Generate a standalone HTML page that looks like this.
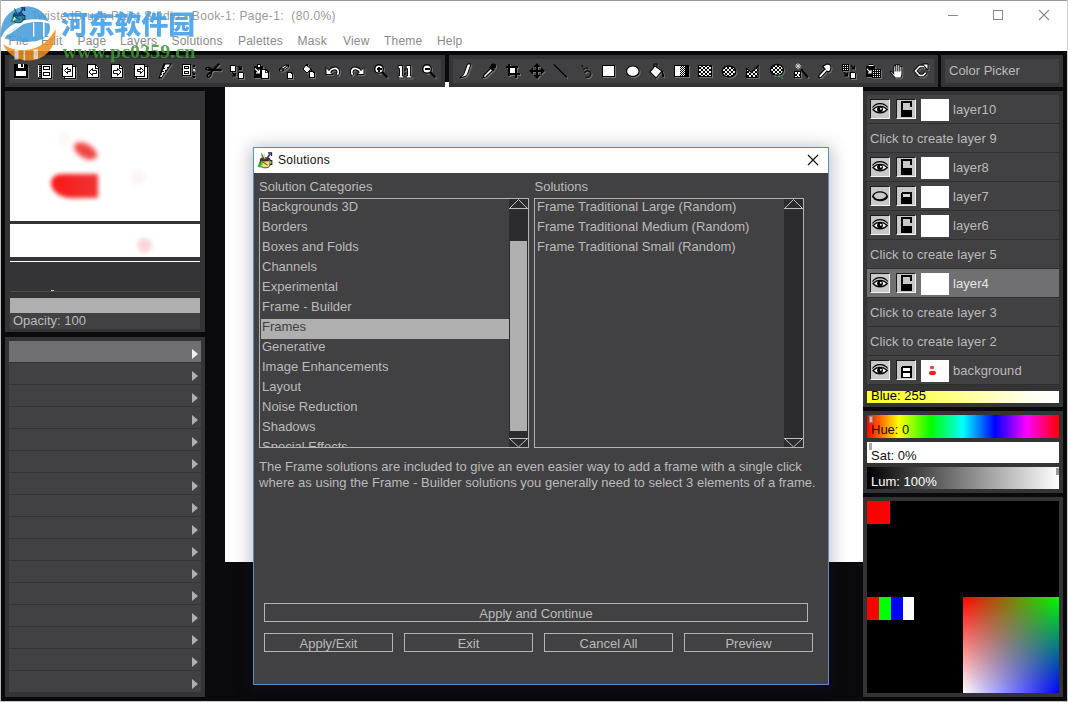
<!DOCTYPE html>
<html lang="en"><head><meta charset="utf-8"><title>TwistedBrush Paint Studio</title>
<style>
*{margin:0;padding:0;box-sizing:border-box}
html,body{width:1068px;height:702px;overflow:hidden;background:#0a090b}
body{position:relative;font-family:"Liberation Sans","Noto Sans CJK SC",sans-serif;font-size:13px;color:#bcbbbc}
.a{position:absolute}
.p{position:absolute;background:#343335}
.i{position:absolute;background:#414042}
.t{position:absolute;white-space:nowrap;line-height:16px}
.mn{position:absolute;top:33px;font-size:12px;color:#8a8a8a;white-space:nowrap;line-height:16px;letter-spacing:.2px}
.ic{position:absolute;top:63px;width:16px;height:16px;overflow:visible;filter:drop-shadow(1px 1px 0 rgba(160,160,160,.55))}
.row{position:absolute;left:9px;width:192px;height:21px;background:#414042}
.tri{position:absolute;left:192px;width:0;height:0;border-left:6px solid #b0afb0;border-top:5.5px solid transparent;border-bottom:5.5px solid transparent}
.lb{position:absolute;border:1px solid #b4b3b4;background:#414042}
.li{position:absolute;left:1px;height:20px;line-height:15px;padding-left:1px;white-space:nowrap;font-size:13px;}
.btn{position:absolute;height:19px;border:1px solid #b4b3b4;text-align:center;line-height:19px;font-size:13px;color:#bcbbbc}
.lr{position:absolute;left:867px;width:192px;height:29px;border-bottom:1px solid #2f2e30}
.lt{position:absolute;top:7px;line-height:16px;font-size:13px;letter-spacing:.08px;white-space:nowrap;color:#bcbbbc}
.eb{position:absolute;top:4px;width:20px;height:20px;background:#c8c8c8;border:1px solid #1a1a1a;border-right-color:#f4f4f4;border-bottom-color:#f4f4f4}
.th{position:absolute;left:54px;top:4px;width:28px;height:22px;background:#fff}
</style></head>
<body>
<div class="a" style="left:0;top:0;width:1068px;height:51px;background:#fff"></div>
<div class="a" style="left:0;top:0;width:1068px;height:1px;background:#9a9a9a"></div>
<div class="a" style="left:0;top:0;width:1px;height:702px;background:#b8b8b8"></div>
<div class="a" style="left:1067px;top:0;width:1px;height:702px;background:#d0d0d0"></div>
<div class="a" style="left:0;top:701px;width:1068px;height:1px;background:#c8c8c8"></div>
<div class="t" style="left:31px;top:8px;font-size:12px;color:#9a9a9a;letter-spacing:.36px;line-height:16px">TwistedBrush Paint Studio - Book-1: Page-1:&nbsp; (80.0%)</div>
<svg class="a" style="left:940px;top:4px" width="120" height="24" viewBox="0 0 120 24"><g stroke="#8a8a8a" fill="none" stroke-width="1" shape-rendering="crispEdges"><path d="M8 11.5h10"/><rect x="53.5" y="6.5" width="9" height="9"/></g><path d="M99 6l10 10M109 6l-10 10" stroke="#8a8a8a" stroke-width="1.1" fill="none"/></svg>
<div class="mn" style="left:8.5px">File</div>
<div class="mn" style="left:41px">Edit</div>
<div class="mn" style="left:77.5px">Page</div>
<div class="mn" style="left:120px">Layers</div>
<div class="mn" style="left:171.5px">Solutions</div>
<div class="mn" style="left:238px">Palettes</div>
<div class="mn" style="left:297.5px">Mask</div>
<div class="mn" style="left:343px">View</div>
<div class="mn" style="left:384px">Theme</div>
<div class="mn" style="left:437px">Help</div>
<div class="a" style="left:225px;top:82px;width:638px;height:480px;background:#fff"></div>
<div class="p" style="left:5px;top:55px;width:440px;height:32px"></div><div class="i" style="left:9px;top:59px;width:432px;height:24px"></div>
<div class="p" style="left:449px;top:55px;width:489px;height:32px"></div><div class="i" style="left:453px;top:59px;width:481px;height:24px"></div>
<div class="p" style="left:941px;top:55px;width:122px;height:32px"></div><div class="i" style="left:945px;top:59px;width:114px;height:24px"></div>
<div class="t" style="left:949px;top:63px;font-size:13px">Color Picker</div>
<svg class="ic" style="left:13px" viewBox="0 0 16 16" shape-rendering="crispEdges"><path d="M1 1h12l2 2v12H1z" fill="#000"/><rect x="5" y="1" width="6" height="4" fill="#fff"/><rect x="8" y="1" width="2" height="3" fill="#000"/><rect x="3" y="8" width="10" height="5" fill="#fff"/></svg>
<svg class="ic" style="left:37px" viewBox="0 0 16 16" shape-rendering="crispEdges"><rect x="4" y="1" width="11" height="14.5" fill="#000"/><rect x="5" y="2" width="9" height="12.5" fill="#fff"/><rect x="1" y="1" width="3" height="0.9" fill="#000"/><rect x="1" y="3" width="3" height="0.9" fill="#000"/><rect x="1" y="5" width="3" height="0.9" fill="#000"/><rect x="1" y="7" width="3" height="0.9" fill="#000"/><rect x="1" y="9" width="3" height="0.9" fill="#000"/><rect x="1" y="11" width="3" height="0.9" fill="#000"/><rect x="1" y="13" width="3" height="0.9" fill="#000"/><rect x="1" y="15" width="3" height="0.9" fill="#000"/><rect x="1" y="2" width="0.8" height="12" fill="#fff"/><rect x="6" y="2.5" width="7" height="4.5" fill="#000"/><rect x="7.2" y="3.7" width="4.6" height="2.1" fill="#fff"/><rect x="6" y="8.5" width="7" height="4.5" fill="#000"/><rect x="7.2" y="9.7" width="4.6" height="2.1" fill="#fff"/></svg>
<svg class="ic" style="left:61px" viewBox="0 0 16 16" shape-rendering="crispEdges"><rect x="3" y="3" width="12" height="12.5" fill="#000"/><rect x="4" y="4" width="10" height="10.5" fill="#fff"/><rect x="1" y="1" width="11" height="12.5" fill="#000"/><rect x="2" y="2" width="9" height="10.5" fill="#fff"/><path d="M3.500 7.500l3-3v2h3v2h-3v2z" fill="#fff" stroke="#000" stroke-width="1" shape-rendering="auto"/></svg>
<svg class="ic" style="left:85px" viewBox="0 0 16 16" shape-rendering="crispEdges"><path d="M2 1h8l4 4v10H2z" fill="#000"/><path d="M3 2h6.500l3.500 3.500v8.500H3z" fill="#fff"/><path d="M10 2v3h3" fill="#fff" stroke="#000" stroke-width="1"/><path d="M4 9l3.500-3.500v2h4v3h-4v2z" fill="#fff" stroke="#000" stroke-width="1" shape-rendering="auto"/></svg>
<svg class="ic" style="left:109px" viewBox="0 0 16 16" shape-rendering="crispEdges"><path d="M2 1h8l4 4v10H2z" fill="#000"/><path d="M3 2h6.500l3.500 3.500v8.500H3z" fill="#fff"/><path d="M10 2v3h3" fill="#fff" stroke="#000" stroke-width="1"/><path d="M12 9l-3.500-3.500v2h-4v3h4v2z" fill="#fff" stroke="#000" stroke-width="1" shape-rendering="auto"/></svg>
<svg class="ic" style="left:133px" viewBox="0 0 16 16" shape-rendering="crispEdges"><rect x="3" y="3" width="12" height="12.5" fill="#000"/><rect x="4" y="4" width="10" height="10.5" fill="#fff"/><rect x="1" y="1" width="11" height="12.5" fill="#000"/><rect x="2" y="2" width="9" height="10.5" fill="#fff"/><path d="M10.500 7.500l-3-3v2h-3v2h3v2z" fill="#fff" stroke="#000" stroke-width="1" shape-rendering="auto"/></svg>
<svg class="ic" style="left:157px" viewBox="0 0 16 16" shape-rendering="crispEdges"><path d="M6.500 .5h8.500l-10.500 15h-3z" fill="#000" shape-rendering="auto"/><path d="M8.500 1.500h4.500l-8.500 12.500h-1.500z" fill="#fff" shape-rendering="auto"/><path d="M6 5.500h1.500M5 8.500h1.500M3.500 11.500h1.500M11.500 4.500h-1.500M9.500 7.500h-1.500M7.500 10.500h-1.500" fill="none" stroke="#000" stroke-width="1"/></svg>
<svg class="ic" style="left:181px" viewBox="0 0 16 16" shape-rendering="crispEdges"><rect x="1" y="1" width="9" height="12" fill="#000"/><rect x="2" y="2" width="7" height="10" fill="#fff"/><rect x="3" y="3" width="5" height="3" fill="#000"/><rect x="4" y="4" width="3" height="1" fill="#fff"/><rect x="3" y="8" width="5" height="3" fill="#000"/><rect x="4" y="9" width="3" height="1" fill="#fff"/><rect x="12" y="2" width="2" height="2" fill="#000"/><rect x="12" y="6" width="2" height="2" fill="#ddd"/><rect x="12" y="10" width="2" height="2" fill="#000"/><rect x="12" y="13" width="2" height="2" fill="#000"/><rect x="11" y="9" width="1" height="1" fill="#000"/><rect x="11" y="13" width="1" height="1" fill="#000"/></svg>
<svg class="ic" style="left:205px" viewBox="0 0 16 16" shape-rendering="crispEdges"><g shape-rendering="auto" fill="none" stroke="#000"><path d="M13.500 1.500L4.500 10.500M15.500 7.200L4 6.300" stroke-width="2.300" stroke-linecap="round"/><ellipse cx="3.300" cy="5.800" rx="2.400" ry="1.400" stroke-width="1.300"/><ellipse cx="4.200" cy="12" rx="1.500" ry="2.600" transform="rotate(38 4.200 12)" stroke-width="1.300"/></g></svg>
<svg class="ic" style="left:229px" viewBox="0 0 16 16" shape-rendering="crispEdges"><path d="M1 1.5h4l2 2v5h-6z" fill="#000"/><path d="M2 2.5h2.500l1.500 1.500v3.500h-4z" fill="#fff"/><path d="M9 8.5h4l2 2v5h-6z" fill="#000"/><path d="M10 9.5h2.500l1.500 1.500v3.500h-4z" fill="#fff"/><path d="M9 3l3 3M12.300 3.300v3h-3M3 9.500l3 3M6.300 9.800v3h-3" fill="none" stroke="#000" stroke-width="1.3" shape-rendering="auto"/></svg>
<svg class="ic" style="left:253px" viewBox="0 0 16 16" shape-rendering="crispEdges"><rect x="0.5" y="3" width="9" height="11.5" fill="#000"/><rect x="3.5" y="1" width="4.5" height="3" fill="#000"/><rect x="4.5" y="1.8" width="2.5" height="0.8" fill="#fff"/><rect x="4.5" y="3.2" width="2.5" height="0.8" fill="#fff"/><path d="M2 5.500l4 4M6.300 6.500v3.300h-3.300" fill="none" stroke="#fff" stroke-width="1.3" shape-rendering="auto"/><path d="M7.500 5.500h5l3 3v7h-8z" fill="#000"/><path d="M8.500 6.500h3.500l2.500 2.500v5.500h-6z" fill="#fff"/><path d="M12 6.500v2.500h2.500" fill="none" stroke="#000" stroke-width="0.8"/></svg>
<svg class="ic" style="left:277px" viewBox="0 0 16 16" shape-rendering="crispEdges"><path d="M2.500 6l5.500-3.800h3.500l-5.500 3.800zM2.500 6h3.500v2h-3.500zM6 6l5.500-3.800v2l-5.500 3.800z" fill="#fff" stroke="#000" stroke-width="1" shape-rendering="auto"/><path d="M9.5 8.5h4l2 2v5h-6z" fill="#000"/><path d="M10.5 9.5h2.500l1.500 1.500v3.500h-4z" fill="#fff"/></svg>
<svg class="ic" style="left:301px" viewBox="0 0 16 16" shape-rendering="crispEdges"><path d="M5 2l5 4-4 4-4-4z" fill="#fff" stroke="#000" stroke-width="1" shape-rendering="auto"/><rect x="5" y="1" width="2" height="2" fill="#000"/><path d="M10 6l1.500 3" fill="none" stroke="#000" stroke-width="1.5" shape-rendering="auto"/><path d="M8 8h4l2 2v5h-6z" fill="#000"/><path d="M9 9h2.500l1.500 1.500v3.500h-4z" fill="#fff"/></svg>
<svg class="ic" style="left:325px" viewBox="0 0 16 16" shape-rendering="crispEdges"><g shape-rendering="auto" fill="none" stroke-linecap="butt"><path d="M5 9C6.500 4.500 12.500 4 13.300 8.500C13.500 10 12.800 11 11.800 12" stroke="#000" stroke-width="3.600"/><path d="M1 4.500V11.500H8Z" fill="#fff" stroke="#000" stroke-width="1"/><path d="M4 9.500C6.500 4.500 12.500 4 13.300 8.500C13.500 10 12.800 11 12.200 11.600" stroke="#fff" stroke-width="1.600"/></g></svg>
<svg class="ic" style="left:349px" viewBox="0 0 16 16" shape-rendering="crispEdges"><g shape-rendering="auto" fill="none" stroke-linecap="butt" transform="translate(16 0) scale(-1 1)"><path d="M5 9C6.500 4.500 12.500 4 13.300 8.500C13.500 10 12.800 11 11.800 12" stroke="#000" stroke-width="3.600"/><path d="M1 4.500V11.500H8Z" fill="#fff" stroke="#000" stroke-width="1"/><path d="M4 9.500C6.500 4.500 12.500 4 13.300 8.500C13.500 10 12.800 11 12.200 11.600" stroke="#fff" stroke-width="1.600"/></g></svg>
<svg class="ic" style="left:373px" viewBox="0 0 16 16" shape-rendering="crispEdges"><g shape-rendering="auto"><path d="M9 9l5.500 5.500" stroke="#000" stroke-width="2.200"/><circle cx="6" cy="6" r="4.300" fill="#fff" stroke="#000" stroke-width="1.400"/><path d="M3.500 6h5M6 3.500v5" stroke="#000" stroke-width="1.300" shape-rendering="crispEdges"/></g></svg>
<svg class="ic" style="left:397px" viewBox="0 0 16 16" shape-rendering="crispEdges"><g shape-rendering="auto"><path d="M1.200 2.500h4.300v10.500h1.500v2h-6v-2h1.500v-7.500h-1.300z" fill="#fff" stroke="#000" stroke-width="0.9"/><path d="M9.200 2.500h4.300v10.500h1.500v2h-6v-2h1.500v-7.500h-1.300z" fill="#fff" stroke="#000" stroke-width="0.9"/><rect x="7" y="5.8" width="1.8" height="2" fill="#111"/><rect x="7" y="10" width="1.8" height="2" fill="#111"/></g></svg>
<svg class="ic" style="left:421px" viewBox="0 0 16 16" shape-rendering="crispEdges"><g shape-rendering="auto"><path d="M9 9l5.500 5.500" stroke="#000" stroke-width="2.200"/><circle cx="6" cy="6" r="4.300" fill="#fff" stroke="#000" stroke-width="1.400"/><path d="M3.500 6h5" stroke="#000" stroke-width="1.300" shape-rendering="crispEdges"/></g></svg>
<svg class="ic" style="left:457px" viewBox="0 0 16 16" shape-rendering="crispEdges"><path d="M10.500 1h3.500l-3.500 10c-1 2-3 3.200-7.500 3.500c2.500-1 3.500-2.500 4-4z" fill="#fff" stroke="#000" stroke-width="1" shape-rendering="auto"/></svg>
<svg class="ic" style="left:481px" viewBox="0 0 16 16" shape-rendering="crispEdges"><g shape-rendering="auto"><path d="M2 14.500l1-2.500 7-7 2 2-7 7z" fill="#fff" stroke="#000" stroke-width="1.2"/><path d="M9 3.500l4 4" fill="none" stroke="#000" stroke-width="2.4"/><circle cx="12.500" cy="3" r="2.600" fill="#000"/></g></svg>
<svg class="ic" style="left:505px" viewBox="0 0 16 16" shape-rendering="crispEdges"><rect x="3" y="1" width="2" height="12" fill="#000"/><rect x="1" y="3" width="12" height="2" fill="#000"/><rect x="10" y="3" width="2" height="12" fill="#000"/><rect x="3" y="10" width="12" height="2" fill="#000"/><rect x="5" y="5" width="5" height="5" fill="#fff"/></svg>
<svg class="ic" style="left:529px" viewBox="0 0 16 16" shape-rendering="crispEdges"><path d="M8 0l3.500 4h-2.500v3h3v-2.500l4 3.500-4 3.500v-2.500h-3v3h2.500l-3.500 4-3.500-4h2.500v-3h-3v2.500l-4-3.500 4-3.500v2.500h3v-3h-2.500z" fill="#000" shape-rendering="auto"/></svg>
<svg class="ic" style="left:553px" viewBox="0 0 16 16" shape-rendering="crispEdges"><path d="M1 1.500l13 13" fill="none" stroke="#000" stroke-width="1.5" shape-rendering="auto"/></svg>
<svg class="ic" style="left:577px" viewBox="0 0 16 16" shape-rendering="crispEdges"><path d="M4.500 2l2 2.500M6.500 7c.5-2.500 3.500-2.500 4.500-.5M7.500 10c1-3 6-2.500 6.500 1-.5 3-3.500 4-5.500 3" fill="none" stroke="#161616" stroke-width="1.4" shape-rendering="auto"/></svg>
<svg class="ic" style="left:601px" viewBox="0 0 16 16" shape-rendering="crispEdges"><rect x="1" y="2" width="13" height="12" fill="#000"/><rect x="2" y="3" width="11" height="10" fill="#fff"/></svg>
<svg class="ic" style="left:625px" viewBox="0 0 16 16" shape-rendering="crispEdges"><ellipse cx="7.800" cy="8.300" rx="6.300" ry="5.300" fill="#fff" stroke="#000" stroke-width="1.200" shape-rendering="auto"/></svg>
<svg class="ic" style="left:649px" viewBox="0 0 16 16" shape-rendering="crispEdges"><g shape-rendering="auto"><path d="M6 3l7 5-6 7-6-6z" fill="#fff" stroke="#000" stroke-width="1.1"/><path d="M5 4v-3h3v2.500" fill="none" stroke="#000" stroke-width="1.1"/><path d="M13 8l1.500 6" fill="none" stroke="#000" stroke-width="1.8"/></g></svg>
<svg class="ic" style="left:673px" viewBox="0 0 16 16" shape-rendering="crispEdges"><rect x="1" y="2" width="15" height="12" fill="#000"/><rect x="2" y="3" width="5" height="10" fill="#fff"/><rect x="7" y="3" width="1" height="1" fill="#fff"/><rect x="9" y="3" width="1" height="1" fill="#fff"/><rect x="8" y="4" width="1" height="1" fill="#fff"/><rect x="10" y="4" width="1" height="1" fill="#fff"/><rect x="7" y="5" width="1" height="1" fill="#fff"/><rect x="9" y="5" width="1" height="1" fill="#fff"/><rect x="8" y="6" width="1" height="1" fill="#fff"/><rect x="10" y="6" width="1" height="1" fill="#fff"/><rect x="7" y="7" width="1" height="1" fill="#fff"/><rect x="9" y="7" width="1" height="1" fill="#fff"/><rect x="8" y="8" width="1" height="1" fill="#fff"/><rect x="10" y="8" width="1" height="1" fill="#fff"/><rect x="7" y="9" width="1" height="1" fill="#fff"/><rect x="9" y="9" width="1" height="1" fill="#fff"/><rect x="8" y="10" width="1" height="1" fill="#fff"/><rect x="10" y="10" width="1" height="1" fill="#fff"/><rect x="7" y="11" width="1" height="1" fill="#fff"/><rect x="9" y="11" width="1" height="1" fill="#fff"/><rect x="8" y="12" width="1" height="1" fill="#fff"/><rect x="10" y="12" width="1" height="1" fill="#fff"/><rect x="11" y="3" width="1" height="1" fill="#fff"/><rect x="11" y="5" width="1" height="1" fill="#fff"/><rect x="11" y="7" width="1" height="1" fill="#fff"/><rect x="11" y="9" width="1" height="1" fill="#fff"/><rect x="11" y="11" width="1" height="1" fill="#fff"/></svg>
<svg class="ic" style="left:697px" viewBox="0 0 16 16" shape-rendering="crispEdges"><defs><pattern id="ck" width="4" height="4" patternUnits="userSpaceOnUse"><rect width="4" height="4" fill="#000"/><rect width="2" height="2" fill="#fff"/><rect x="2" y="2" width="2" height="2" fill="#fff"/></pattern></defs><rect x="1" y="2" width="14" height="12" fill="#000"/><rect x="2" y="3" width="12" height="10" fill="url(#ck)"/></svg>
<svg class="ic" style="left:721px" viewBox="0 0 16 16" shape-rendering="crispEdges"><ellipse cx="8" cy="8.500" rx="6.800" ry="5.500" fill="url(#ck)" stroke="#000" stroke-width="1.300" shape-rendering="auto"/></svg>
<svg class="ic" style="left:745px" viewBox="0 0 16 16" shape-rendering="crispEdges"><path d="M1.500 5.500l5 4 6.500-6.500v11.500h-11.500z" fill="url(#ck)" stroke="#000" stroke-width="1.2" shape-rendering="auto"/></svg>
<svg class="ic" style="left:769px" viewBox="0 0 16 16" shape-rendering="crispEdges"><g shape-rendering="auto"><ellipse cx="8" cy="7" rx="6.500" ry="5.500" fill="url(#ck)" stroke="#000" stroke-width="1.300"/><path d="M5 13c2-2 5-2 8 2" fill="none" stroke="#2e7d32" stroke-width="1.200"/></g></svg>
<svg class="ic" style="left:793px" viewBox="0 0 16 16" shape-rendering="crispEdges"><g shape-rendering="auto"><path d="M8 6l7 8.500" fill="none" stroke="#000" stroke-width="2"/><path d="M3 1l4 4M7 1l-4 4M5 0v6M2 3h6" fill="none" stroke="#ddd" stroke-width="0.8"/></g><rect x="1" y="8" width="7" height="7" fill="#000"/><rect x="2" y="9" width="2" height="2" fill="#fff"/><rect x="5" y="9" width="2" height="2" fill="#fff"/><rect x="3.5" y="11" width="2" height="2" fill="#fff"/><rect x="2" y="13" width="2" height="1" fill="#fff"/><rect x="5" y="13" width="2" height="1" fill="#fff"/></svg>
<svg class="ic" style="left:817px" viewBox="0 0 16 16" shape-rendering="crispEdges"><g shape-rendering="auto"><path d="M6 3l4-2c3 0 4 2 4 4l-1 3-2 1-1-1-6 6.500h-2v-2l6-6.500-1-1z" fill="#fff" stroke="#000" stroke-width="1.1"/><path d="M5 3.500l3 3" fill="none" stroke="#000" stroke-width="1"/></g></svg>
<svg class="ic" style="left:841px" viewBox="0 0 16 16" shape-rendering="crispEdges"><rect x="1" y="1" width="7" height="7" fill="#000"/><rect x="2.0" y="2.0" width="1.0" height="1.0" fill="#fff"/><rect x="2.0" y="4.0" width="1.0" height="1.0" fill="#fff"/><rect x="2.0" y="6.0" width="1.0" height="1.0" fill="#fff"/><rect x="4.0" y="2.0" width="1.0" height="1.0" fill="#fff"/><rect x="4.0" y="4.0" width="1.0" height="1.0" fill="#fff"/><rect x="4.0" y="6.0" width="1.0" height="1.0" fill="#fff"/><rect x="6.0" y="2.0" width="1.0" height="1.0" fill="#fff"/><rect x="6.0" y="4.0" width="1.0" height="1.0" fill="#fff"/><rect x="6.0" y="6.0" width="1.0" height="1.0" fill="#fff"/><path d="M9 8.5h4l2 2v5h-6z" fill="#000"/><path d="M10 9.5h2.500l1.500 1.500v3.500h-4z" fill="#fff"/><path d="M10 2.500l3 3M13.300 2.800v3h-3M3 9.500l3 3M6.300 9.800v3h-3" fill="none" stroke="#000" stroke-width="1.3" shape-rendering="auto"/></svg>
<svg class="ic" style="left:865px" viewBox="0 0 16 16" shape-rendering="crispEdges"><rect x="1" y="3" width="9" height="11" fill="#000"/><rect x="4" y="1" width="4" height="3" fill="#000"/><rect x="4" y="2" width="4" height="1" fill="#fff"/><path d="M2 6l4 4M6 7v3h-3" fill="none" stroke="#fff" stroke-width="1.2" shape-rendering="auto"/><rect x="7" y="6" width="9" height="9" fill="#000"/><rect x="8.0" y="7.0" width="1.0" height="1.0" fill="#fff"/><rect x="8.0" y="9.0" width="1.0" height="1.0" fill="#fff"/><rect x="8.0" y="11.0" width="1.0" height="1.0" fill="#fff"/><rect x="8.0" y="13.0" width="1.0" height="1.0" fill="#fff"/><rect x="10.0" y="7.0" width="1.0" height="1.0" fill="#fff"/><rect x="10.0" y="9.0" width="1.0" height="1.0" fill="#fff"/><rect x="10.0" y="11.0" width="1.0" height="1.0" fill="#fff"/><rect x="10.0" y="13.0" width="1.0" height="1.0" fill="#fff"/><rect x="12.0" y="7.0" width="1.0" height="1.0" fill="#fff"/><rect x="12.0" y="9.0" width="1.0" height="1.0" fill="#fff"/><rect x="12.0" y="11.0" width="1.0" height="1.0" fill="#fff"/><rect x="12.0" y="13.0" width="1.0" height="1.0" fill="#fff"/><rect x="14.0" y="7.0" width="1.0" height="1.0" fill="#fff"/><rect x="14.0" y="9.0" width="1.0" height="1.0" fill="#fff"/><rect x="14.0" y="11.0" width="1.0" height="1.0" fill="#fff"/><rect x="14.0" y="13.0" width="1.0" height="1.0" fill="#fff"/></svg>
<svg class="ic" style="left:889px" viewBox="0 0 16 16" shape-rendering="crispEdges"><g shape-rendering="auto"><rect x="4.5" y="2.5" width="2.6" height="8" fill="#000"/><rect x="6.5" y="1" width="2.6" height="9" fill="#000"/><rect x="8.5" y="1.5" width="2.6" height="9" fill="#000"/><rect x="10.5" y="3" width="2.6" height="8" fill="#000"/><path d="M4.300 7h9v5l-1 3.300h-6.500l-1.500-2.500z" fill="#000"/><path d="M4.800 10.500L2.300 7.500L.8 8.800L4.500 14z" fill="#000"/><rect x="5.3" y="3.3" width="1" height="6.5" fill="#fff"/><rect x="7.3" y="1.8" width="1" height="8" fill="#fff"/><rect x="9.3" y="2.3" width="1" height="7.5" fill="#fff"/><rect x="11.3" y="3.8" width="1" height="6" fill="#fff"/><path d="M5.200 8.500h7.200v3.300l-.8 2.700h-5.300l-1.100-2z" fill="#fff"/><path d="M5.300 12L2.400 8.700L2 9.100L5.300 13.500z" fill="#fff"/></g></svg>
<svg class="ic" style="left:913px" viewBox="0 0 16 16" shape-rendering="crispEdges"><g shape-rendering="auto" fill="none" stroke-linejoin="miter"><path d="M11 3.500H6.500L2.500 8L6.500 12.500H10L13 9.500" stroke="#000" stroke-width="3.600"/><path d="M11 3.500H6.500L2.500 8L6.500 12.500H10L12.700 9.800" stroke="#fff" stroke-width="1.600"/><path d="M9.500 1L15 1L15 7Z" fill="#fff" stroke="#000" stroke-width="1"/></g></svg>
<div class="p" style="left:5px;top:91px;width:200px;height:241px"></div>
<div class="a" style="left:10px;top:120px;width:190px;height:101px;background:#fff;overflow:hidden"><div class="a" style="left:63px;top:23.5px;width:25px;height:14px;border-radius:50%;background:#ee3c3c;transform:rotate(30deg);filter:blur(2.4px);opacity:.95"></div><div class="a" style="left:41px;top:54px;width:47px;height:24px;border-radius:12px 2px 3px 24px / 10px 2px 3px 18px;background:linear-gradient(90deg,#ff1414,#f22a2a 60%,#f03434);filter:blur(2.2px)"></div><div class="a" style="left:121px;top:50px;width:15px;height:15px;border-radius:50%;background:#fbdfe2;filter:blur(2.5px);opacity:.38"></div><div class="a" style="left:47px;top:12px;width:14px;height:14px;border-radius:50%;background:#fbe6e8;filter:blur(2.5px);opacity:.3"></div></div>
<div class="a" style="left:10px;top:224px;width:190px;height:33px;background:#fff;overflow:hidden"><div class="a" style="left:127px;top:14px;width:15px;height:15px;border-radius:50%;background:#f9c9cd;filter:blur(2px);opacity:.75"></div></div>
<div class="a" style="left:10px;top:261px;width:190px;height:1px;background:#fff"></div>
<div class="a" style="left:10px;top:291px;width:190px;height:1px;background:#4c4b4d"></div>
<div class="a" style="left:51px;top:290px;width:3px;height:1px;background:#d0d0d0"></div>
<div class="a" style="left:10px;top:298px;width:190px;height:15px;background:#b0afb0"></div>
<div class="i" style="left:10px;top:313px;width:190px;height:16px"></div>
<div class="t" style="left:13px;top:313px;font-size:13px;">Opacity: 100</div>
<div class="p" style="left:5px;top:337px;width:200px;height:360px"></div>
<div class="row" style="top:341px;background:#706f71"></div><div class="tri" style="top:349px;border-left-color:#f2f2f2"></div>
<div class="row" style="top:363px"></div><div class="tri" style="top:371px"></div>
<div class="row" style="top:385px"></div><div class="tri" style="top:393px"></div>
<div class="row" style="top:407px"></div><div class="tri" style="top:415px"></div>
<div class="row" style="top:429px"></div><div class="tri" style="top:437px"></div>
<div class="row" style="top:451px"></div><div class="tri" style="top:459px"></div>
<div class="row" style="top:473px"></div><div class="tri" style="top:481px"></div>
<div class="row" style="top:495px"></div><div class="tri" style="top:503px"></div>
<div class="row" style="top:517px"></div><div class="tri" style="top:525px"></div>
<div class="row" style="top:539px"></div><div class="tri" style="top:547px"></div>
<div class="row" style="top:561px"></div><div class="tri" style="top:569px"></div>
<div class="row" style="top:583px"></div><div class="tri" style="top:591px"></div>
<div class="row" style="top:605px"></div><div class="tri" style="top:613px"></div>
<div class="row" style="top:627px"></div><div class="tri" style="top:635px"></div>
<div class="row" style="top:649px"></div><div class="tri" style="top:657px"></div>
<div class="row" style="top:671px"></div><div class="tri" style="top:679px"></div>
<div class="p" style="left:863px;top:91px;width:200px;height:316px"></div>
<div class="i" style="left:867px;top:95px;width:192px;height:289px"></div>
<div class="lr" style="top:95px"><div class="eb" style="left:3px"><svg class="a" style="left:0;top:0" width="18" height="18" viewBox="0 0 18 18"><path d="M1.500 7.500C5 2.200 13 2.200 16.800 7.500" fill="none" stroke="#000" stroke-width="1.200"/><path d="M2 9.500C6 5.200 12 5.200 16.300 9.500C12 14 6 14 2 9.500z" fill="#fff" stroke="#000" stroke-width="1.200"/><circle cx="9" cy="9.300" r="2.900" fill="#000"/><circle cx="9.800" cy="8.800" r="1" fill="#fff"/></svg></div><div class="eb" style="left:29px"><svg class="a" style="left:0;top:0" width="18" height="18" viewBox="0 0 18 18" shape-rendering="crispEdges"><path d="M4 1h11v6h-2v-4h-7v7h-2z" fill="#000"/><rect x="4" y="10" width="11" height="7" fill="#000"/></svg></div><div class="th"></div><div class="lt" style="left:86px">layer10</div></div>
<div class="lr" style="top:124px"><div class="lt" style="left:3px">Click to create layer 9</div></div>
<div class="lr" style="top:153px"><div class="eb" style="left:3px"><svg class="a" style="left:0;top:0" width="18" height="18" viewBox="0 0 18 18"><path d="M1.500 7.500C5 2.200 13 2.200 16.800 7.500" fill="none" stroke="#000" stroke-width="1.200"/><path d="M2 9.500C6 5.200 12 5.200 16.300 9.500C12 14 6 14 2 9.500z" fill="#fff" stroke="#000" stroke-width="1.200"/><circle cx="9" cy="9.300" r="2.900" fill="#000"/><circle cx="9.800" cy="8.800" r="1" fill="#fff"/></svg></div><div class="eb" style="left:29px"><svg class="a" style="left:0;top:0" width="18" height="18" viewBox="0 0 18 18" shape-rendering="crispEdges"><path d="M4 1h11v6h-2v-4h-7v7h-2z" fill="#000"/><rect x="4" y="10" width="11" height="7" fill="#000"/></svg></div><div class="th"></div><div class="lt" style="left:86px">layer8</div></div>
<div class="lr" style="top:182px"><div class="eb" style="left:3px"><svg class="a" style="left:0;top:0" width="18" height="18" viewBox="0 0 18 18"><path d="M1.800 9C4 3.400 14 3.400 16.400 9" fill="none" stroke="#000" stroke-width="1.200"/><path d="M1.800 9C4 14.600 14 14.600 16.400 9" fill="none" stroke="#000" stroke-width="2"/></svg></div><div class="eb" style="left:29px"><svg class="a" style="left:0;top:0" width="18" height="18" viewBox="0 0 18 18" shape-rendering="crispEdges"><path d="M5 5h9l1 1v11h-11v-11z" fill="#000"/><rect x="6" y="7" width="7" height="3" fill="#d4d4d4"/></svg></div><div class="th"></div><div class="lt" style="left:86px">layer7</div></div>
<div class="lr" style="top:211px"><div class="eb" style="left:3px"><svg class="a" style="left:0;top:0" width="18" height="18" viewBox="0 0 18 18"><path d="M1.500 7.500C5 2.200 13 2.200 16.800 7.500" fill="none" stroke="#000" stroke-width="1.200"/><path d="M2 9.500C6 5.200 12 5.200 16.300 9.500C12 14 6 14 2 9.500z" fill="#fff" stroke="#000" stroke-width="1.200"/><circle cx="9" cy="9.300" r="2.900" fill="#000"/><circle cx="9.800" cy="8.800" r="1" fill="#fff"/></svg></div><div class="eb" style="left:29px"><svg class="a" style="left:0;top:0" width="18" height="18" viewBox="0 0 18 18" shape-rendering="crispEdges"><path d="M4 1h11v6h-2v-4h-7v7h-2z" fill="#000"/><rect x="4" y="10" width="11" height="7" fill="#000"/></svg></div><div class="th"></div><div class="lt" style="left:86px">layer6</div></div>
<div class="lr" style="top:240px"><div class="lt" style="left:3px">Click to create layer 5</div></div>
<div class="lr" style="top:269px;background:#706f71"><div class="eb" style="left:3px"><svg class="a" style="left:0;top:0" width="18" height="18" viewBox="0 0 18 18"><path d="M1.500 7.500C5 2.200 13 2.200 16.800 7.500" fill="none" stroke="#000" stroke-width="1.200"/><path d="M2 9.500C6 5.200 12 5.200 16.300 9.500C12 14 6 14 2 9.500z" fill="#fff" stroke="#000" stroke-width="1.200"/><circle cx="9" cy="9.300" r="2.900" fill="#000"/><circle cx="9.800" cy="8.800" r="1" fill="#fff"/></svg></div><div class="eb" style="left:29px"><svg class="a" style="left:0;top:0" width="18" height="18" viewBox="0 0 18 18" shape-rendering="crispEdges"><path d="M4 1h11v6h-2v-4h-7v7h-2z" fill="#000"/><rect x="4" y="10" width="11" height="7" fill="#000"/></svg></div><div class="th"></div><div class="lt" style="left:86px;color:#e6e6e6">layer4</div></div>
<div class="lr" style="top:298px"><div class="lt" style="left:3px">Click to create layer 3</div></div>
<div class="lr" style="top:327px"><div class="lt" style="left:3px">Click to create layer 2</div></div>
<div class="lr" style="top:356px"><div class="eb" style="left:3px"><svg class="a" style="left:0;top:0" width="18" height="18" viewBox="0 0 18 18"><path d="M1.500 7.500C5 2.200 13 2.200 16.800 7.500" fill="none" stroke="#000" stroke-width="1.200"/><path d="M2 9.500C6 5.200 12 5.200 16.300 9.500C12 14 6 14 2 9.500z" fill="#fff" stroke="#000" stroke-width="1.200"/><circle cx="9" cy="9.300" r="2.900" fill="#000"/><circle cx="9.800" cy="8.800" r="1" fill="#fff"/></svg></div><div class="eb" style="left:29px"><svg class="a" style="left:0;top:0" width="18" height="18" viewBox="0 0 18 18" shape-rendering="crispEdges"><path d="M5 5h9l1 1v11h-11v-11z" fill="#000"/><rect x="6" y="7" width="7" height="3" fill="#fff"/><rect x="6" y="12" width="7" height="4" fill="#fff"/></svg></div><div class="th"><div class="a" style="left:9px;top:6px;width:4px;height:3px;background:#f04040;border-radius:1px"></div><div class="a" style="left:8px;top:11px;width:7px;height:4px;background:#f02020;border-radius:2px"></div></div><div class="lt" style="left:86px">background</div></div>
<div class="a" style="left:867px;top:391px;width:192px;height:12px;background:linear-gradient(90deg,#ffff28 0%,#ffff50 25%,#ffffa0 55%,#fffff0 85%,#fff 100%);overflow:hidden"><div class="t" style="left:4px;top:-3px;color:#000;font-size:13px">Blue: 255</div></div>
<div class="p" style="left:863px;top:411px;width:200px;height:82px"></div>
<div class="a" style="left:867px;top:415px;width:192px;height:23px;background:linear-gradient(90deg,#f00 0%,#ff0 16.6%,#0f0 33.3%,#0ff 50%,#00f 66.6%,#f0f 83.3%,#f00 100%)"></div>
<div class="a" style="left:869px;top:416px;width:4px;height:7px;background:#c0c0c0;border:1px solid #888"></div>
<div class="t" style="left:871px;top:422px;color:#111;font-size:13px">Hue: 0</div>
<div class="a" style="left:867px;top:442px;width:192px;height:21px;background:#fff"></div>
<div class="a" style="left:869px;top:443px;width:3px;height:7px;background:#aaa"></div>
<div class="t" style="left:871px;top:448px;color:#111;font-size:13px">Sat: 0%</div>
<div class="a" style="left:867px;top:467px;width:192px;height:22px;background:linear-gradient(90deg,#000,#fff)"></div>
<div class="a" style="left:1056px;top:468px;width:3px;height:7px;background:#999"></div>
<div class="t" style="left:871px;top:474px;color:#fff;font-size:13px">Lum: 100%</div>
<div class="p" style="left:863px;top:497px;width:200px;height:200px"></div>
<div class="a" style="left:867px;top:501px;width:192px;height:192px;background:#000"></div>
<div class="a" style="left:867px;top:501px;width:23px;height:23px;background:#f00"></div>
<div class="a" style="left:867px;top:597px;width:12px;height:23px;background:#f00"></div>
<div class="a" style="left:879px;top:597px;width:12px;height:23px;background:#0f0"></div>
<div class="a" style="left:891px;top:597px;width:12px;height:23px;background:#00f"></div>
<div class="a" style="left:903px;top:597px;width:11px;height:23px;background:#fff"></div>
<div class="a" style="left:963px;top:597px;width:96px;height:96px;background:linear-gradient(90deg,#fff,#00f)"><div class="a" style="left:0;top:0;width:96px;height:96px;background:linear-gradient(90deg,#f00,#0f0);-webkit-mask-image:linear-gradient(180deg,#000,transparent);mask-image:linear-gradient(180deg,#000,transparent)"></div></div>
<div class="a" style="left:253px;top:147px;width:576px;height:538px;background:#414042;border:1px solid #5b8cc2;box-shadow:0 2px 16px 2px rgba(30,25,70,.30)"></div>
<div class="a" style="left:254px;top:148px;width:574px;height:25px;background:#fff"></div>
<svg class="a" style="left:257px;top:152px" width="17" height="17" viewBox="0 0 17 17"><path d="M3 8C2 11 1.500 13 .5 14.500L3.500 15.800L4.500 9z" fill="#2fa82f"/><path d="M3.500 7.500h9.500v5.500c0 1.800-2 2.800-4.700 2.800s-4.800-1-4.800-2.800z" fill="#e6e272" stroke="#3a3a20" stroke-width=".9"/><ellipse cx="8.200" cy="7.300" rx="4.800" ry="1.800" fill="#7a2030" stroke="#222" stroke-width=".8"/><path d="M5.200 7l-1.200-6.500 2.700 3.500z" fill="#2f9a2f"/><path d="M6.800 6.500l.7-5.500 1.200 5.500z" fill="#e8d870"/><path d="M8.500 7.500l4-6.500 1.500 1-4 6z" fill="#2a3a9a"/><path d="M11 .8h3.500v3.200" fill="none" stroke="#222" stroke-width="1.300"/><path d="M13 8.500h1.800v4h-1.800" fill="none" stroke="#222" stroke-width="1.100"/><path d="M4 9l6.500 4" stroke="#222" stroke-width=".8"/><path d="M4 9.500l-1.500 5 3.500-2.500z" fill="#49c23a"/></svg>
<div class="t" style="left:278px;top:152px;font-size:12px;color:#111;letter-spacing:.29px">Solutions</div>
<svg class="a" style="left:806px;top:153px" width="14" height="14" viewBox="0 0 14 14"><path d="M2 2l10 10M12 2L2 12" stroke="#111" stroke-width="1.2" fill="none"/></svg>
<div class="t" style="left:259px;top:179px;">Solution Categories</div>
<div class="t" style="left:534.5px;top:179px;">Solutions</div>
<div class="lb" style="left:259px;top:198px;width:270px;height:250px;overflow:hidden"><div class="li" style="top:0px">Backgrounds 3D</div><div class="li" style="top:20px">Borders</div><div class="li" style="top:40px">Boxes and Folds</div><div class="li" style="top:60px">Channels</div><div class="li" style="top:80px">Experimental</div><div class="li" style="top:100px">Frame - Builder</div><div class="li" style="top:120px;background:#b0afb0;color:#414042;width:248px">Frames</div><div class="li" style="top:140px">Generative</div><div class="li" style="top:160px">Image Enhancements</div><div class="li" style="top:180px">Layout</div><div class="li" style="top:200px">Noise Reduction</div><div class="li" style="top:220px">Shadows</div><div class="li" style="top:240px">Special Effects</div><div class="a" style="left:249px;top:0;width:19px;height:248px;background:#2c2b2d"></div><div class="a" style="left:250px;top:42px;width:17px;height:190px;background:#b0afb0"></div><svg class="a" style="left:249px;top:0" width="19" height="248" viewBox="0 0 19 248"><path d="M0 9.500h19M0.500 9.500l9-9 9 9" fill="none" stroke="#c0bfc0" stroke-width="1"/><path d="M0 239.500h19M0.500 239.500l9 8.500 9-8.500" fill="none" stroke="#c0bfc0" stroke-width="1"/></svg></div>
<div class="lb" style="left:534px;top:198px;width:270px;height:250px;overflow:hidden"><div class="li" style="top:0px">Frame Traditional Large (Random)</div><div class="li" style="top:20px">Frame Traditional Medium (Random)</div><div class="li" style="top:40px">Frame Traditional Small (Random)</div><div class="a" style="left:249px;top:0;width:19px;height:248px;background:#2c2b2d"></div><svg class="a" style="left:249px;top:0" width="19" height="248" viewBox="0 0 19 248"><path d="M0 9.500h19M0.500 9.500l9-9 9 9" fill="none" stroke="#c0bfc0" stroke-width="1"/><path d="M0 239.500h19M0.500 239.500l9 8.500 9-8.500" fill="none" stroke="#c0bfc0" stroke-width="1"/></svg></div>
<div class="t" style="left:259px;top:459px;letter-spacing:.01px">The Frame solutions are included to give an even easier way to add a frame with a single click</div>
<div class="t" style="left:259px;top:475px;letter-spacing:.01px">where as using the Frame - Builder solutions you generally need to select 3 elements of a frame.</div>
<div class="btn" style="left:264px;top:603px;width:544px">Apply and Continue</div>
<div class="btn" style="left:264px;top:633px;width:129px">Apply/Exit</div>
<div class="btn" style="left:404px;top:633px;width:129px">Exit</div>
<div class="btn" style="left:544px;top:633px;width:129px">Cancel All</div>
<div class="btn" style="left:684px;top:633px;width:129px">Preview</div>
<svg class="a" style="left:0;top:0" width="200" height="66" viewBox="0 0 200 66"><g opacity=".86"><path d="M0.500 37C0 17 13 6.500 27 6.500C40 6.500 50 17 50 28C50 31 49 34 47 36C40 42 28 43 18 41C10 40 4 38.500 0.500 37Z" fill="#439bd9"/><path d="M1 39C4 28 15 21 30 19.500C38 19 45 19.500 50 22L50 24C44 22 38 21.500 31 22.500C19 24 8 31 3 41Z" fill="#fff"/><path d="M9 34.500L23.500 24V22.500L6.500 34.500Z" fill="#fff"/><rect x="33" y="22.500" width="1.300" height="14" fill="#fff"/><rect x="43" y="21.500" width="1.600" height="16" fill="#fff"/><path d="M3 44C8 56 20 61 30 60.500C46 60 57 46 55.500 29C50 40 40 49 26 50C16 50.500 8 48 3 44Z" fill="#ef8f22"/><path d="M14.500 49.500h4v10h-4zM23.500 50.500h1.600v10h-1.600zM33.500 49.500h4.500v9.500h-4.500z" fill="#fff" opacity=".8"/></g><text x="61" y="33.800" font-family="'Liberation Sans','Noto Sans CJK SC',sans-serif" font-weight="900" font-size="26.500" fill="#3f9ee8" opacity=".88" textLength="134" lengthAdjust="spacingAndGlyphs">河东软件园</text><text x="62.500" y="57.500" font-family="'Liberation Serif',serif" font-weight="bold" font-size="19" fill="#3c9a35" opacity=".86" textLength="133" lengthAdjust="spacingAndGlyphs">www.pc0359.cn</text></svg>
<svg class="a" style="left:10px;top:7px" width="17" height="17" viewBox="0 0 17 17"><path d="M3 8C2 11 1.500 13 .5 14.500L3.500 15.800L4.500 9z" fill="#1f8a6a"/><path d="M3.500 7.500h9.500v5.500c0 1.800-2 2.800-4.700 2.800s-4.800-1-4.800-2.800z" fill="#2b8fa8" stroke="#16334a" stroke-width=".9"/><ellipse cx="8.200" cy="7.300" rx="4.800" ry="1.800" fill="#1d4f8a" stroke="#16334a" stroke-width=".8"/><path d="M5.200 7l-1.200-6.500 2.700 3.500z" fill="#1f7a5a"/><path d="M6.800 6.500l.7-5.500 1.200 5.500z" fill="#3a9ab8"/><path d="M8.500 7.500l4-6.500 1.500 1-4 6z" fill="#1c3f9a"/><path d="M11 .8h3.500v3.200" fill="none" stroke="#16334a" stroke-width="1.300"/><path d="M13 8.500h1.800v4h-1.800" fill="none" stroke="#16334a" stroke-width="1.100"/><path d="M4 9l6.500 4" stroke="#16334a" stroke-width=".8"/><path d="M4 9.500l-1.500 5 3.500-2.500z" fill="#d8f0c0"/></svg>
</body></html>
